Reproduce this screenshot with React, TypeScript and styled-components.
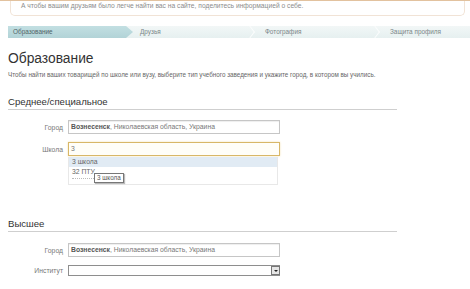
import React from 'react';
import styled, {createGlobalStyle} from 'styled-components';

const GlobalStyle = createGlobalStyle`
    html, body {
        margin: 0;
        padding: 0;
        background: #fff;
        overflow: hidden;
    }
    body {
        font-family: "Liberation Sans", Arial, sans-serif;
        color: #555;
    }
`;

const Page = styled.div`
    width: 470px;
    height: 289px;
    position: relative;
    overflow: hidden;
    border-top: 1px solid #e2c29f;
    box-sizing: border-box;
`;

const Notice = styled.div`
    margin: 0 5px 0 10px;
    height: 15px;
    box-sizing: border-box;
    border: 1px solid #f1e3d6;
    border-top: none;
    border-radius: 0 0 5px 5px;
    padding: 1px 10px 0;
    font-size: 6.7px;
    line-height: 8px;
    color: #8c8c8c;
    white-space: nowrap;
`;

const Steps = styled.div`
    display: flex;
    margin: 10px 0 0 8px;
    height: 12px;
    overflow: hidden;
    background: linear-gradient(#f2f7f7, #e6f0f0);
`;

const Step = styled.div<{ $active?: boolean; $last?: boolean }>`
    position: relative;
    width: ${p => (p.$last ? 'auto' : '125px')};
    flex: ${p => (p.$last ? '1 1 0' : 'none')};
    box-sizing: border-box;
    padding-left: ${p => (p.$active ? 5 : 7)}px;
    font-size: 6.4px;
    line-height: 12px;
    white-space: nowrap;
    color: ${p => (p.$active ? '#4f6466' : '#7a8687')};
    background: ${p => (p.$active ? 'linear-gradient(#c2dfe2, #b2d3d7)' : 'transparent')};
    clip-path: ${p => (p.$active ? 'polygon(0 0, calc(100% - 7px) 0, 100% 50%, calc(100% - 7px) 100%, 0 100%)' : 'none')};

    &::after {
        content: '';
        display: ${p => (p.$active || p.$last ? 'none' : 'block')};
        position: absolute;
        right: 4px;
        top: 2px;
        width: 7px;
        height: 7px;
        border-top: 1px solid #fbfdfd;
        border-right: 1px solid #fbfdfd;
        transform: rotate(45deg) skew(8deg, 8deg);
    }
`;

const Content = styled.div`
    padding: 0 8px;
`;

const Title = styled.h1`
    margin: 11px 0 0;
    font-size: 13.8px;
    line-height: 20px;
    font-weight: normal;
    color: #333;
`;

const Lead = styled.p`
    margin: 2px 0 0;
    font-size: 6.3px;
    line-height: 8px;
    color: #666;
    white-space: nowrap;
`;

const Section = styled.h2<{ $gap: number }>`
    margin: ${p => p.$gap}px 0 0;
    width: 389px;
    font-size: 9.6px;
    line-height: 12px;
    font-weight: normal;
    color: #333;
    padding-bottom: 1px;
    border-bottom: 1px solid #cfcfcf;
`;

const Row = styled.div<{ $gap: number }>`
    display: grid;
    grid-template-columns: 55px 212px;
    column-gap: 5px;
    align-items: center;
    margin-top: ${p => p.$gap}px;
    position: relative;
`;

const Label = styled.span`
    text-align: right;
    font-size: 6.8px;
    color: #777;
`;

const Field = styled.div<{ $focus?: boolean }>`
    height: 14px;
    box-sizing: border-box;
    border: 1px solid ${p => (p.$focus ? '#d8b767' : '#c6c6c6')};
    box-shadow: ${p => (p.$focus ? '0 0 2px #f3e2b4' : 'inset 0 1px 1px #eee')};
    background: ${p => (p.$focus ? '#fffef8' : '#fff')};
    padding-left: 2px;
    font-size: 6.8px;
    line-height: 12px;
    color: #777;
    white-space: nowrap;

    b {
        color: #555;
    }
`;

const SelectBox = styled.div`
    height: 11px;
    box-sizing: border-box;
    border: 1px solid #8e8e8e;
    border-right: none;
    display: flex;
    justify-content: flex-end;
    background: #fff;
`;

const SelectArrow = styled.div`
    width: 9px;
    height: 9px;
    box-sizing: border-box;
    border: 1px solid #777;
    background: #e6e6e6;
    display: flex;
    align-items: center;
    justify-content: center;

    &::after {
        content: '';
        border-left: 2px solid transparent;
        border-right: 2px solid transparent;
        border-top: 2px solid #222;
    }
`;

const Suggest = styled.div`
    position: absolute;
    left: 60px;
    top: 15px;
    width: 210px;
    box-sizing: border-box;
    border: 1px solid #e8e8e8;
    border-top: none;
    background: #fff;
    z-index: 2;
`;

const SuggestItem = styled.div<{ $hover?: boolean }>`
    height: 10px;
    padding-left: 3px;
    font-size: 6.8px;
    line-height: 10px;
    color: #666;
    background: ${p => (p.$hover ? '#e1ebf4' : 'transparent')};
`;

const SuggestMore = styled.div`
    height: 5px;
    margin: 1px 0 0 3px;
    width: 40px;
    border-top: 1px dotted #bbb;
`;

const Tip = styled.div`
    position: absolute;
    left: 25px;
    top: 16px;
    padding: 0 2px;
    font-size: 6.3px;
    line-height: 8px;
    color: #555;
    background: #fff;
    border: 1px solid #777;
    box-shadow: 1px 1px 1px #bbb;
    z-index: 3;
`;

const App: React.FC = () => {
    return (
        <Page>
            <GlobalStyle/>
            <Notice>
                А чтобы вашим друзьям было легче найти вас на сайте, поделитесь информацией о себе.
            </Notice>

            <Steps>
                <Step $active>Образование</Step>
                <Step>Друзья</Step>
                <Step>Фотография</Step>
                <Step $last>Защита профиля</Step>
            </Steps>

            <Content>
                <Title>Образование</Title>
                <Lead>
                    Чтобы найти ваших товарищей по школе или вузу, выберите тип учебного заведения и укажите город, в котором вы учились.
                </Lead>

                <Section $gap={17}>Среднее/специальное</Section>
                <Row $gap={10}>
                    <Label>Город</Label>
                    <Field><b>Вознесенск</b>, Николаевская область, Украина</Field>
                </Row>
                <Row $gap={8}>
                    <Label>Школа</Label>
                    <Field $focus>3</Field>
                    <Suggest>
                        <SuggestItem $hover>3 школа</SuggestItem>
                        <SuggestItem>32 ПТУ</SuggestItem>
                        <SuggestMore/>
                        <Tip>3 школа</Tip>
                    </Suggest>
                </Row>

                <Section $gap={62}>Высшее</Section>
                <Row $gap={11}>
                    <Label>Город</Label>
                    <Field><b>Вознесенск</b>, Николаевская область, Украина</Field>
                </Row>
                <Row $gap={8}>
                    <Label>Институт</Label>
                    <SelectBox><SelectArrow/></SelectBox>
                </Row>
            </Content>
        </Page>
    );
};

export default App;
